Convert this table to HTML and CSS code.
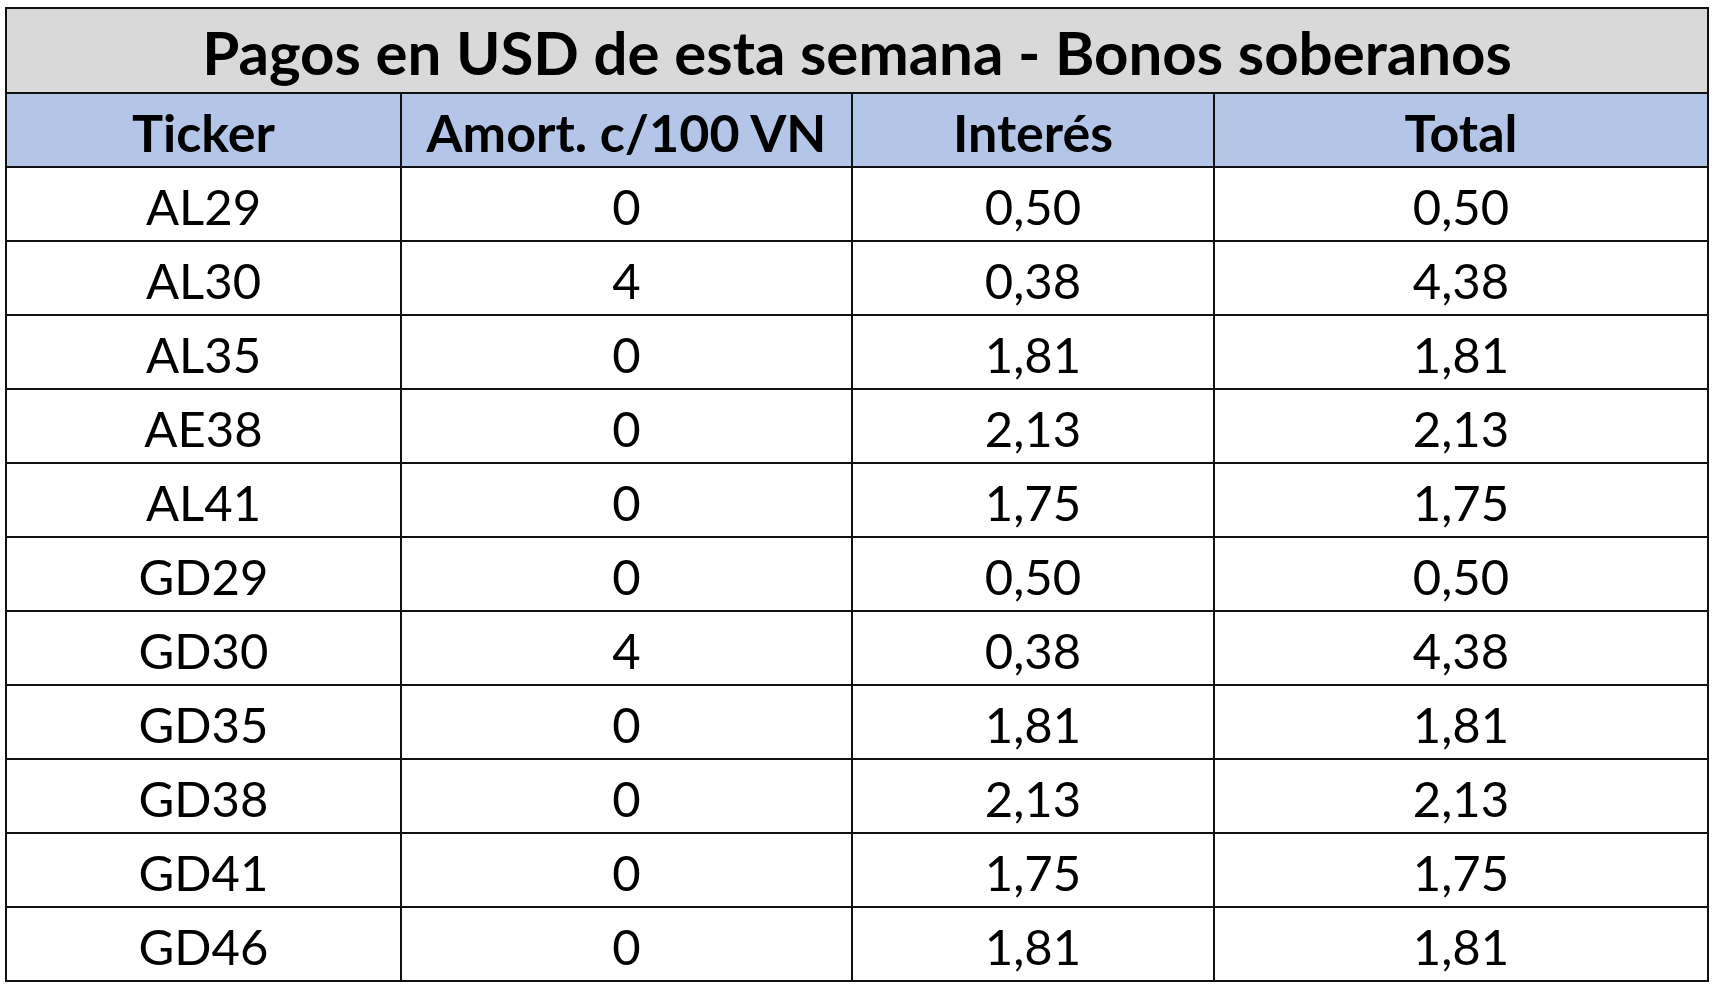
FILE: index.html
```html
<!DOCTYPE html>
<html lang="es">
<head>
<meta charset="utf-8">
<title>Pagos en USD de esta semana - Bonos soberanos</title>
<link rel="stylesheet" href="styles.css">
</head>
<body>
<div class="page">
<table class="pagos">
<colgroup>
<col class="c1"><col class="c2"><col class="c3"><col class="c4">
</colgroup>
<thead>
<tr class="title-row"><th colspan="4">Pagos en USD de esta semana - Bonos soberanos</th></tr>
<tr class="head-row"><th>Ticker</th><th>Amort. c/100 VN</th><th>Interés</th><th>Total</th></tr>
</thead>
<tbody>
<tr><td>AL29</td><td>0</td><td>0,50</td><td>0,50</td></tr>
<tr><td>AL30</td><td>4</td><td>0,38</td><td>4,38</td></tr>
<tr><td>AL35</td><td>0</td><td>1,81</td><td>1,81</td></tr>
<tr><td>AE38</td><td>0</td><td>2,13</td><td>2,13</td></tr>
<tr><td>AL41</td><td>0</td><td>1,75</td><td>1,75</td></tr>
<tr><td>GD29</td><td>0</td><td>0,50</td><td>0,50</td></tr>
<tr><td>GD30</td><td>4</td><td>0,38</td><td>4,38</td></tr>
<tr><td>GD35</td><td>0</td><td>1,81</td><td>1,81</td></tr>
<tr><td>GD38</td><td>0</td><td>2,13</td><td>2,13</td></tr>
<tr><td>GD41</td><td>0</td><td>1,75</td><td>1,75</td></tr>
<tr><td>GD46</td><td>0</td><td>1,81</td><td>1,81</td></tr>
</tbody>
</table>
</div>
</body>
</html>
```
FILE: styles.css
```css
html, body {
  margin: 0;
  padding: 0;
  background: #ffffff;
}
.page {
  padding: 7px 0 0 5px;
}
.pagos {
  border-collapse: collapse;
  table-layout: fixed;
  width: 1702px;
  font-family: Lato, "Open Sans", sans-serif;
  color: #000;
}
.c1 { width: 395px; }
.c2 { width: 451px; }
.c3 { width: 362px; }
.c4 { width: 494px; }
.pagos th,
.pagos td {
  border: 2px solid #111;
  padding: 0;
  text-align: center;
  vertical-align: middle;
  line-height: 1;
  box-sizing: border-box;
}
.title-row th {
  height: 85px;
  padding-top: 2px;
  background: #d9d9d9;
  font-size: 60px;
  font-weight: 700;
}
.head-row th {
  height: 74px;
  padding-top: 4px;
  background: #b4c6e7;
  font-size: 52px;
  font-weight: 700;
}
.pagos td {
  height: 74px;
  padding-top: 5px;
  font-size: 49px;
  font-weight: 400;
}
```
